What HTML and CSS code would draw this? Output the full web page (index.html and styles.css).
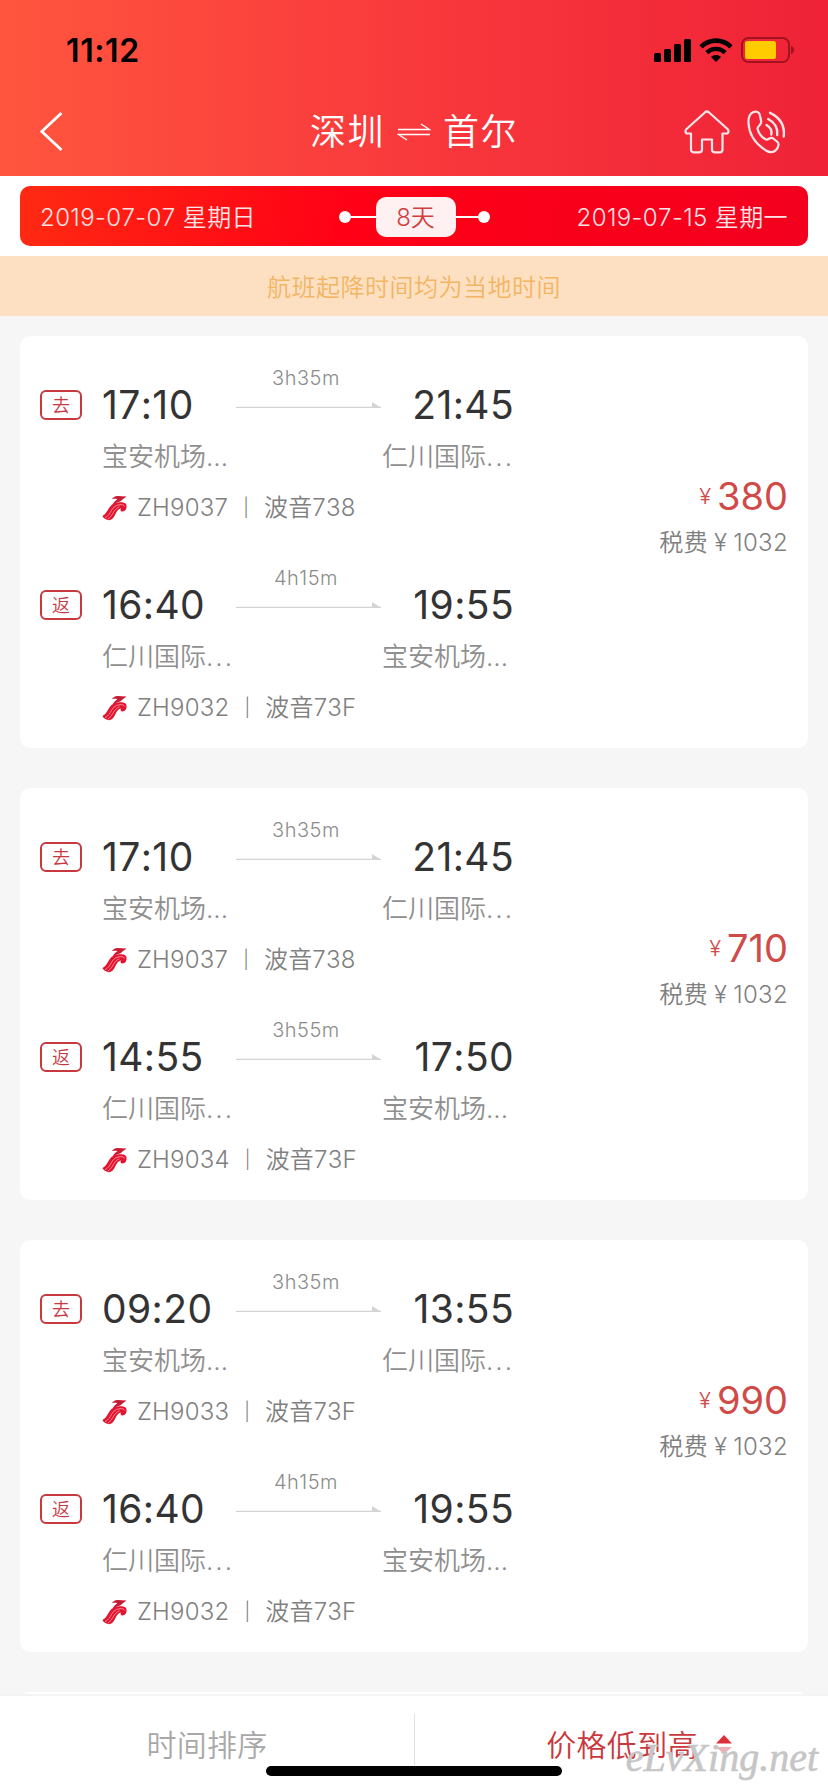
FILE: index.html
```html
<!DOCTYPE html>
<html lang="zh-CN">
<head>
    <meta charset="UTF-8">
    <meta name="viewport" content="width=device-width, initial-scale=1.0">
    <title>深圳 - 首尔</title>
    <link rel="stylesheet" href="styles.css">
</head>
<body>
    <svg class="sprite" xmlns="http://www.w3.org/2000/svg">
        <symbol id="arrow" viewBox="0 0 146 8">
            <path d="M0 5.3H145" fill="none" stroke="#d4d4d4" stroke-width="1.2"/>
            <path d="M136 0L145 5.5H136Z" fill="#d4d4d4"/>
        </symbol>
        <symbol id="airline" viewBox="0 0 26 26">
            <path d="M9.5 4C11.5 2.6 12.5 1 15.5 1L24.5 1.4C23.5 2.8 21.5 3 20.5 4.6C19.5 6.2 17 7 14.5 7.8L10.5 10C11.5 7 13.5 5.2 15.5 4.2C13.5 3.6 11.5 4 9.5 4Z" fill="#c81c34"/>
            <path d="M0.5 21C6 18.5 6.5 9.5 13.5 8C17 7 24 6.6 24.5 10.5C25 14 23 16.8 19.8 16.4C18.3 16 18 14.4 19.3 13.6C16 13.5 14.5 17.5 13 20C11.5 22.8 10 24.8 7.5 25.2C5 25 1.5 23.8 0.5 21Z" fill="#e3142f"/>
            <path d="M3 22.8C9.5 19.5 9 11.5 16 10C19 9.3 22 9.4 22.5 11.5M6 24C11.5 20.5 11.5 13.5 17.5 11.8" fill="none" stroke="#ffb5bd" stroke-width="0.7"/>
        </symbol>
    </svg>

    <header class="header">
        <div class="status">
            <span class="clock">11:12</span>
            <div class="status-icons">
                <svg width="37" height="23" viewBox="0 0 37 23">
                    <rect x="0" y="14" width="7" height="9" rx="1.5"/>
                    <rect x="10" y="10" width="7" height="13" rx="1.5"/>
                    <rect x="20" y="5" width="7" height="18" rx="1.5"/>
                    <rect x="30" y="0" width="7" height="23" rx="1.5"/>
                </svg>
                <svg width="34" height="24" viewBox="0 0 34 24">
                    <path d="M2 8.8C10.5 0.6 23.5 0.6 32 8.8" fill="none" stroke="#000" stroke-width="4.6"/>
                    <path d="M7.8 14.6C13.2 9.6 20.8 9.6 26.2 14.6" fill="none" stroke="#000" stroke-width="4.4"/>
                    <path d="M12 18.9C15 16.3 19 16.3 22 18.9L17 24Z"/>
                </svg>
                <svg width="54" height="26" viewBox="0 0 54 26">
                    <rect x="1" y="1" width="47" height="24" rx="6.5" fill="none" stroke="#a3121f" stroke-width="2"/>
                    <rect x="4" y="4" width="31" height="18" rx="2.5" fill="#ffcc00"/>
                    <path d="M50 8.8C54 10.3 54 15.7 50 17.2Z" fill="#a3121f"/>
                </svg>
            </div>
        </div>
        <div class="nav">
            <svg class="back" width="24" height="40" viewBox="0 0 24 40">
                <path d="M21.5 1L1.8 19.5L21.5 38" fill="none" stroke="#fff" stroke-width="2.8"/>
            </svg>
            <h1 class="title">
                <span>深圳</span>
                <svg width="34" height="18" viewBox="0 0 34 18">
                    <path d="M1 6.5H32.5L24 1M33 11.5H1.5L10 17" fill="none" stroke="#fff" stroke-width="1.4"/>
                </svg>
                <span>首尔</span>
            </h1>
            <div class="nav-icons">
                <svg width="46" height="44" viewBox="0 0 46 44">
                    <path d="M21.2 2.2Q23 0.8 24.8 2.2L43.5 19Q45.5 21.5 43.5 23.5H38.5V39.5Q38.5 42.3 35.7 42.3H31Q28 42.3 28 39.5V29.5H18V39.5Q18 42.3 15 42.3H9.5Q7 42.3 7 39.5V23.5H2.5Q0.5 21.5 2.5 19Z" fill="none" stroke="#ffe6e9" stroke-width="2.2" stroke-linejoin="round"/>
                </svg>
                <svg width="40" height="44" viewBox="0 0 40 44">
                    <path d="M6 2.2C9.5 0.7 12.5 2 13 5.5L14.2 11.5C14.6 15 10.5 16 10.5 18.5C11.5 23 15 27.5 19 29.5C21.5 30.3 22.5 27.2 25.5 28L30 31.5C32.8 34 31.5 37 29 40C26 43.5 22 42.3 18.5 40.2C9 34 2 24.5 1.5 13C1.2 8 2 4.2 6 2.2Z" fill="none" stroke="#ffe6e9" stroke-width="2.2"/>
                    <path d="M19.5 15Q25.5 18.5 24.3 24.5M21.2 9Q31.5 14.5 30.2 25M23 2.8Q38.5 10 36.8 26.5" fill="none" stroke="#ffe6e9" stroke-width="2.4" stroke-linecap="round"/>
                </svg>
            </div>
        </div>
    </header>

    <div class="dates">
        <div class="dates-bar">
            <span class="date">2019-07-07 星期日</span>
            <div class="stay">
                <i class="dot"></i><i class="line"></i>
                <span class="days">8天</span>
                <i class="line short"></i><i class="dot"></i>
            </div>
            <span class="date date-back">2019-07-15 星期一</span>
        </div>
    </div>

    <div class="notice">航班起降时间均为当地时间</div>

    <main class="list">
        <section class="card">
            <div class="legs">
                <div class="leg">
                    <span class="badge">去</span>
                    <div class="info">
                        <span class="time">17:10</span>
                        <div class="duration"><span>3h35m</span><svg class="arrow"><use href="#arrow"/></svg></div>
                        <span class="time arrive">21:45</span>
                        <span class="airport">宝安机场...</span>
                        <span class="airport to">仁川国际<i class="dots">...</i></span>
                        <div class="flight"><svg class="airline"><use href="#airline"/></svg><span class="no">ZH9037</span><span class="sep">|</span><span>波音738</span></div>
                    </div>
                </div>
                <div class="leg">
                    <span class="badge">返</span>
                    <div class="info">
                        <span class="time">16:40</span>
                        <div class="duration"><span>4h15m</span><svg class="arrow"><use href="#arrow"/></svg></div>
                        <span class="time arrive">19:55</span>
                        <span class="airport">仁川国际<i class="dots">...</i></span>
                        <span class="airport to">宝安机场...</span>
                        <div class="flight"><svg class="airline"><use href="#airline"/></svg><span class="no">ZH9032</span><span class="sep">|</span><span>波音73F</span></div>
                    </div>
                </div>
            </div>
            <div class="price">
                <div class="fare"><span class="yen">¥</span>380</div>
                <div class="tax">税费<span class="yen">¥</span>1032</div>
            </div>
        </section>

        <section class="card">
            <div class="legs">
                <div class="leg">
                    <span class="badge">去</span>
                    <div class="info">
                        <span class="time">17:10</span>
                        <div class="duration"><span>3h35m</span><svg class="arrow"><use href="#arrow"/></svg></div>
                        <span class="time arrive">21:45</span>
                        <span class="airport">宝安机场...</span>
                        <span class="airport to">仁川国际<i class="dots">...</i></span>
                        <div class="flight"><svg class="airline"><use href="#airline"/></svg><span class="no">ZH9037</span><span class="sep">|</span><span>波音738</span></div>
                    </div>
                </div>
                <div class="leg">
                    <span class="badge">返</span>
                    <div class="info">
                        <span class="time">14:55</span>
                        <div class="duration"><span>3h55m</span><svg class="arrow"><use href="#arrow"/></svg></div>
                        <span class="time arrive">17:50</span>
                        <span class="airport">仁川国际<i class="dots">...</i></span>
                        <span class="airport to">宝安机场...</span>
                        <div class="flight"><svg class="airline"><use href="#airline"/></svg><span class="no">ZH9034</span><span class="sep">|</span><span>波音73F</span></div>
                    </div>
                </div>
            </div>
            <div class="price">
                <div class="fare"><span class="yen">¥</span>710</div>
                <div class="tax">税费<span class="yen">¥</span>1032</div>
            </div>
        </section>

        <section class="card">
            <div class="legs">
                <div class="leg">
                    <span class="badge">去</span>
                    <div class="info">
                        <span class="time">09:20</span>
                        <div class="duration"><span>3h35m</span><svg class="arrow"><use href="#arrow"/></svg></div>
                        <span class="time arrive">13:55</span>
                        <span class="airport">宝安机场...</span>
                        <span class="airport to">仁川国际<i class="dots">...</i></span>
                        <div class="flight"><svg class="airline"><use href="#airline"/></svg><span class="no">ZH9033</span><span class="sep">|</span><span>波音73F</span></div>
                    </div>
                </div>
                <div class="leg">
                    <span class="badge">返</span>
                    <div class="info">
                        <span class="time">16:40</span>
                        <div class="duration"><span>4h15m</span><svg class="arrow"><use href="#arrow"/></svg></div>
                        <span class="time arrive">19:55</span>
                        <span class="airport">仁川国际<i class="dots">...</i></span>
                        <span class="airport to">宝安机场...</span>
                        <div class="flight"><svg class="airline"><use href="#airline"/></svg><span class="no">ZH9032</span><span class="sep">|</span><span>波音73F</span></div>
                    </div>
                </div>
            </div>
            <div class="price">
                <div class="fare"><span class="yen">¥</span>990</div>
                <div class="tax">税费<span class="yen">¥</span>1032</div>
            </div>
        </section>

        <section class="card"></section>
    </main>

    <footer class="footer">
        <div class="tab">时间排序</div>
        <div class="tab active">
            价格低到高
            <svg width="16" height="20" viewBox="0 0 16 20">
                <path d="M8 0L16 8.5H0Z" fill="#dc2f3a"/>
                <path d="M8 19L16 12H0Z" fill="#eeb0b5"/>
            </svg>
        </div>
        <div class="home-bar"></div>
        <div class="watermark">eLvXing.net</div>
    </footer>
</body>
</html>
```

FILE: styles.css
```css
* {
    box-sizing: border-box;
    margin: 0;
    padding: 0;
}

body {
    height: 1792px;
    display: flex;
    flex-direction: column;
    overflow: hidden;
    background: #f6f6f6;
    font-family: Inter, "Noto Sans CJK SC", sans-serif;
    font-weight: 350;
    font-kerning: none;
    color: #333;
}

i {
    font-style: normal;
}

svg {
    display: block;
    flex-shrink: 0;
}

.sprite {
    position: absolute;
    width: 0;
    height: 0;
}

/* header */
.header {
    flex: none;
    height: 176px;
    background: linear-gradient(90deg, #ff553e, #f93a3c 48%, #ef2237);
}

.status {
    height: 88px;
    padding: 12px 33px 0 66px;
    display: flex;
    align-items: center;
    justify-content: space-between;
}

.clock {
    font-size: 32px;
    font-weight: 600;
    letter-spacing: 0.6px;
    color: #000;
}

.status-icons {
    display: flex;
    align-items: center;
    gap: 8px;
}

.nav {
    height: 88px;
    padding: 0 41px 0 40px;
    display: grid;
    grid-template-columns: 1fr auto 1fr;
    align-items: center;
}

.title {
    display: flex;
    align-items: center;
    gap: 12px;
    padding-left: 1px;
    color: #fff;
    font-size: 36px;
    font-weight: 350;
    line-height: 88px;
    letter-spacing: 1.5px;
}

.title span {
    height: 88px;
}

.nav-icons {
    display: flex;
    justify-content: flex-end;
    gap: 17px;
}

/* dates */
.dates {
    flex: none;
    height: 80px;
    padding: 10px 20px;
    background: #fff;
}

.dates-bar {
    height: 60px;
    padding: 0 20px;
    display: grid;
    grid-template-columns: 1fr auto 1fr;
    align-items: center;
    border-radius: 10px;
    background: linear-gradient(100deg, #ff2a12, #ff0016 42%, #f3001f);
}

.date {
    font-size: 24px;
    line-height: 60px;
    padding-top: 2px;
    letter-spacing: 0.4px;
    color: #ffe3e4;
}

.date-back {
    text-align: right;
}

.stay {
    display: flex;
    align-items: center;
}

.dot {
    width: 12px;
    height: 12px;
    border-radius: 50%;
    background: #fff;
}

.line {
    width: 25px;
    height: 2px;
    background: #fff;
}

.line.short {
    width: 22px;
}

.days {
    width: 80px;
    height: 40px;
    line-height: 41px;
    border-radius: 10px;
    background: #fff0f2;
    color: #cf3f3f;
    font-size: 24px;
    text-align: center;
}

.notice {
    flex: none;
    height: 60px;
    line-height: 63px;
    background: #fde0c2;
    color: #f2b562;
    font-size: 24px;
    letter-spacing: 0.5px;
    text-align: center;
}

/* flights */
.list {
    flex: 1;
    min-height: 0;
    overflow: hidden;
    padding: 20px 20px 0;
}

.card {
    height: 412px;
    margin-bottom: 40px;
    padding: 0 20px;
    display: flex;
    justify-content: space-between;
    border-radius: 10px;
    background: #fff;
}

.legs {
    padding-top: 24px;
}

.leg {
    height: 200px;
    display: flex;
    gap: 20px;
}

.badge {
    width: 42px;
    height: 30px;
    margin-top: 30px;
    border: 2px solid #c8393f;
    border-radius: 6px;
    color: #c8393f;
    font-size: 18px;
    line-height: 27px;
    text-align: center;
}

.info {
    height: 174px;
    display: grid;
    grid-template-columns: 134px 146px 132px;
    grid-template-rows: 70px 52px 52px;
}

.time {
    padding-top: 20px;
    line-height: 50px;
    font-size: 39px;
    font-weight: 380;
    letter-spacing: 0.4px;
}

.arrive {
    text-align: right;
}

.duration {
    padding-top: 6px;
    color: #8c8c8c;
    font-size: 20px;
    line-height: 24px;
    text-align: center;
    letter-spacing: 0.5px;
}

.duration span {
    margin-right: 6px;
}

.arrow {
    width: 146px;
    height: 8px;
    margin-top: 12px;
}

.airport {
    grid-column: 1 / 3;
    line-height: 53px;
    font-size: 26px;
    white-space: nowrap;
    color: #8f8f8f;
}

.airport.to {
    grid-column: 3;
}

.dots {
    letter-spacing: 2px;
}

.flight {
    grid-column: 1 / 4;
    display: flex;
    align-items: center;
    font-size: 24px;
    line-height: 52px;
    letter-spacing: 0.2px;
    color: #808080;
}

.airline {
    width: 26px;
    height: 26px;
    margin-right: 9px;
}

.sep {
    margin: 0 15px;
    font-size: 18px;
}

.price {
    padding-top: 136px;
    text-align: right;
}

.fare {
    height: 48px;
    display: flex;
    justify-content: flex-end;
    line-height: 48px;
    font-size: 38px;
    font-weight: 380;
    color: #d04a48;
}

.fare .yen {
    margin-right: 6px;
    font-size: 22px;
    font-weight: 350;
}

.tax {
    line-height: 46px;
    font-size: 24px;
    letter-spacing: 0.3px;
    color: #808080;
}

.tax .yen {
    margin: 0 6px;
}

/* sort bar */
.footer {
    position: relative;
    flex: none;
    height: 98px;
    display: grid;
    grid-template-columns: 1fr 1fr;
    background: #fff;
    border-top: 2px solid #f4f4f4;
}

.tab {
    height: 98px;
    display: flex;
    align-items: center;
    justify-content: center;
    font-size: 30px;
    line-height: 98px;
    letter-spacing: 0.3px;
    color: #a8a8a8;
}

.tab.active {
    gap: 18px;
    padding-left: 36px;
    font-weight: 350;
    color: #c9383c;
    background: linear-gradient(#e2e2e2, #e2e2e2) 0 18px / 1px 60px no-repeat;
}

.home-bar {
    position: absolute;
    left: 266px;
    top: 70px;
    width: 296px;
    height: 10px;
    border-radius: 5px;
    background: #000;
}

.watermark {
    position: absolute;
    right: 10px;
    top: 40px;
    font: italic 40px/44px "Liberation Serif", serif;
    -webkit-text-stroke: 0.6px #c6c6c6;
    color: #c6c6c6;
}
```
